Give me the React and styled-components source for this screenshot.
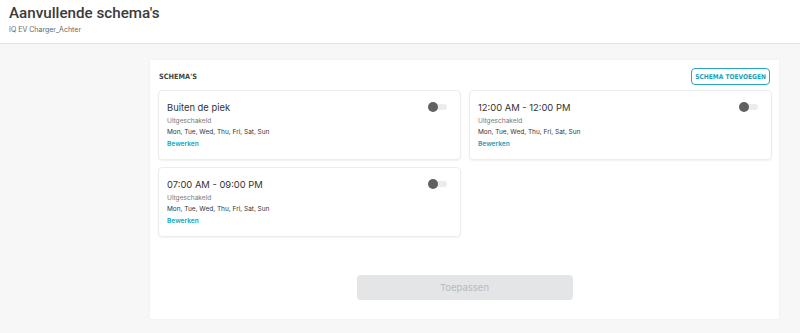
import styled, { createGlobalStyle } from 'styled-components'

const GlobalStyle = createGlobalStyle`
    html, body {
        margin: 0;
        padding: 0;
        background: #f7f7f7;
        font-family: Inter, "Open Sans", sans-serif;
    }
`

const schedules = [
    { title: 'Buiten de piek' },
    { title: '12:00 AM - 12:00 PM' },
    { title: '07:00 AM - 09:00 PM' },
]

const App = () => {
    return (
        <Page>
            <GlobalStyle />
            <Header>
                <h1>Aanvullende schema's</h1>
                <p>IQ EV Charger_Achter</p>
            </Header>
            <Body>
                <Panel>
                    <PanelTop>
                        <Label>SCHEMA'S</Label>
                        <AddButton>SCHEMA TOEVOEGEN</AddButton>
                    </PanelTop>
                    <Grid>
                        {schedules.map((s) => (
                            <Card key={s.title}>
                                <CardHead>
                                    <CardTitle>{s.title}</CardTitle>
                                    <Toggle><span /></Toggle>
                                </CardHead>
                                <Status>Uitgeschakeld</Status>
                                <Days>Mon, Tue, Wed, Thu, Fri, Sat, Sun</Days>
                                <EditLink>Bewerken</EditLink>
                            </Card>
                        ))}
                    </Grid>
                    <Footer>
                        <ApplyButton disabled>Toepassen</ApplyButton>
                    </Footer>
                </Panel>
            </Body>
        </Page>
    )
}

const Page = styled.div`
    width: 800px;
    height: 333px;
    display: flex;
    flex-direction: column;
    overflow: hidden;
`

const Header = styled.header`
    height: 44px;
    box-sizing: border-box;
    background: #fff;
    border-bottom: 1px solid #e2e2e2;
    padding: 3px 9px 0;
    h1{
        margin: 0;
        font-family: Roboto, sans-serif;
        font-size: 15.2px;
        font-weight: 500;
        color: #3b3b3b;
        line-height: 20px;
    }
    p{
        margin: 2px 0 0;
        font-size: 7px;
        color: #666;
    }
`

const Body = styled.div`
    flex: 1;
    padding: 16px 21px 14px 150px;
`

const Panel = styled.section`
    background: #fff;
    height: 259px;
    box-sizing: border-box;
    padding: 8px 8px 0;
    display: flex;
    flex-direction: column;
    box-shadow: 0 0 2px rgba(0,0,0,0.06);
`

const PanelTop = styled.div`
    display: flex;
    justify-content: space-between;
    align-items: center;
    height: 17px;
    margin-bottom: 5px;
`

const Label = styled.span`
    font-family: "DejaVu Sans Condensed", "Liberation Sans Narrow", sans-serif;
    font-weight: bold;
    font-size: 7.3px;
    color: #444;
    padding-left: 1px;
`

const AddButton = styled.button`
    height: 17px;
    padding: 0 3px;
    background: #fff;
    border: 1px solid #2aa8bf;
    border-radius: 4px;
    color: #1c9fb8;
    font-family: "DejaVu Sans Condensed", "Liberation Sans Narrow", sans-serif;
    font-weight: bold;
    font-size: 6.6px;
    margin-right: 1px;
`

const Grid = styled.div`
    display: grid;
    grid-template-columns: 303px 303px;
    column-gap: 8px;
    row-gap: 7px;
`

const Card = styled.div`
    height: 70px;
    box-sizing: border-box;
    border: 1px solid #ececec;
    border-radius: 4px;
    box-shadow: 0 1px 2px rgba(0,0,0,0.06);
    padding: 9px 8px 0;
`

const CardHead = styled.div`
    display: flex;
    justify-content: space-between;
    align-items: center;
    height: 14px;
    margin-bottom: 2px;
`

const CardTitle = styled.span`
    font-size: 9.4px;
    font-weight: 400;
    color: #333;
`

const Toggle = styled.div`
    position: relative;
    width: 18px;
    height: 6px;
    border-radius: 3px;
    background: #ececec;
    margin-right: 5px;
    span{
        position: absolute;
        left: -1px;
        top: -2px;
        width: 10px;
        height: 10px;
        border-radius: 50%;
        background: #606060;
    }
`

const Status = styled.div`
    font-size: 6.6px;
    color: #777;
    line-height: 11px;
`

const Days = styled.div`
    font-size: 6.5px;
    color: #333;
    line-height: 11px;
`

const EditLink = styled.div`
    font-size: 6.6px;
    color: #16a3bd;
    font-weight: 600;
    line-height: 12px;
`

const Footer = styled.div`
    flex: 1;
    display: flex;
    justify-content: center;
    align-items: flex-start;
    padding-top: 38px;
`

const ApplyButton = styled.button`
    width: 216px;
    height: 25px;
    border: none;
    border-radius: 4px;
    background: #e4e5e7;
    color: #b9babc;
    font-family: Inter, sans-serif;
    font-size: 9.5px;
`

export default App
